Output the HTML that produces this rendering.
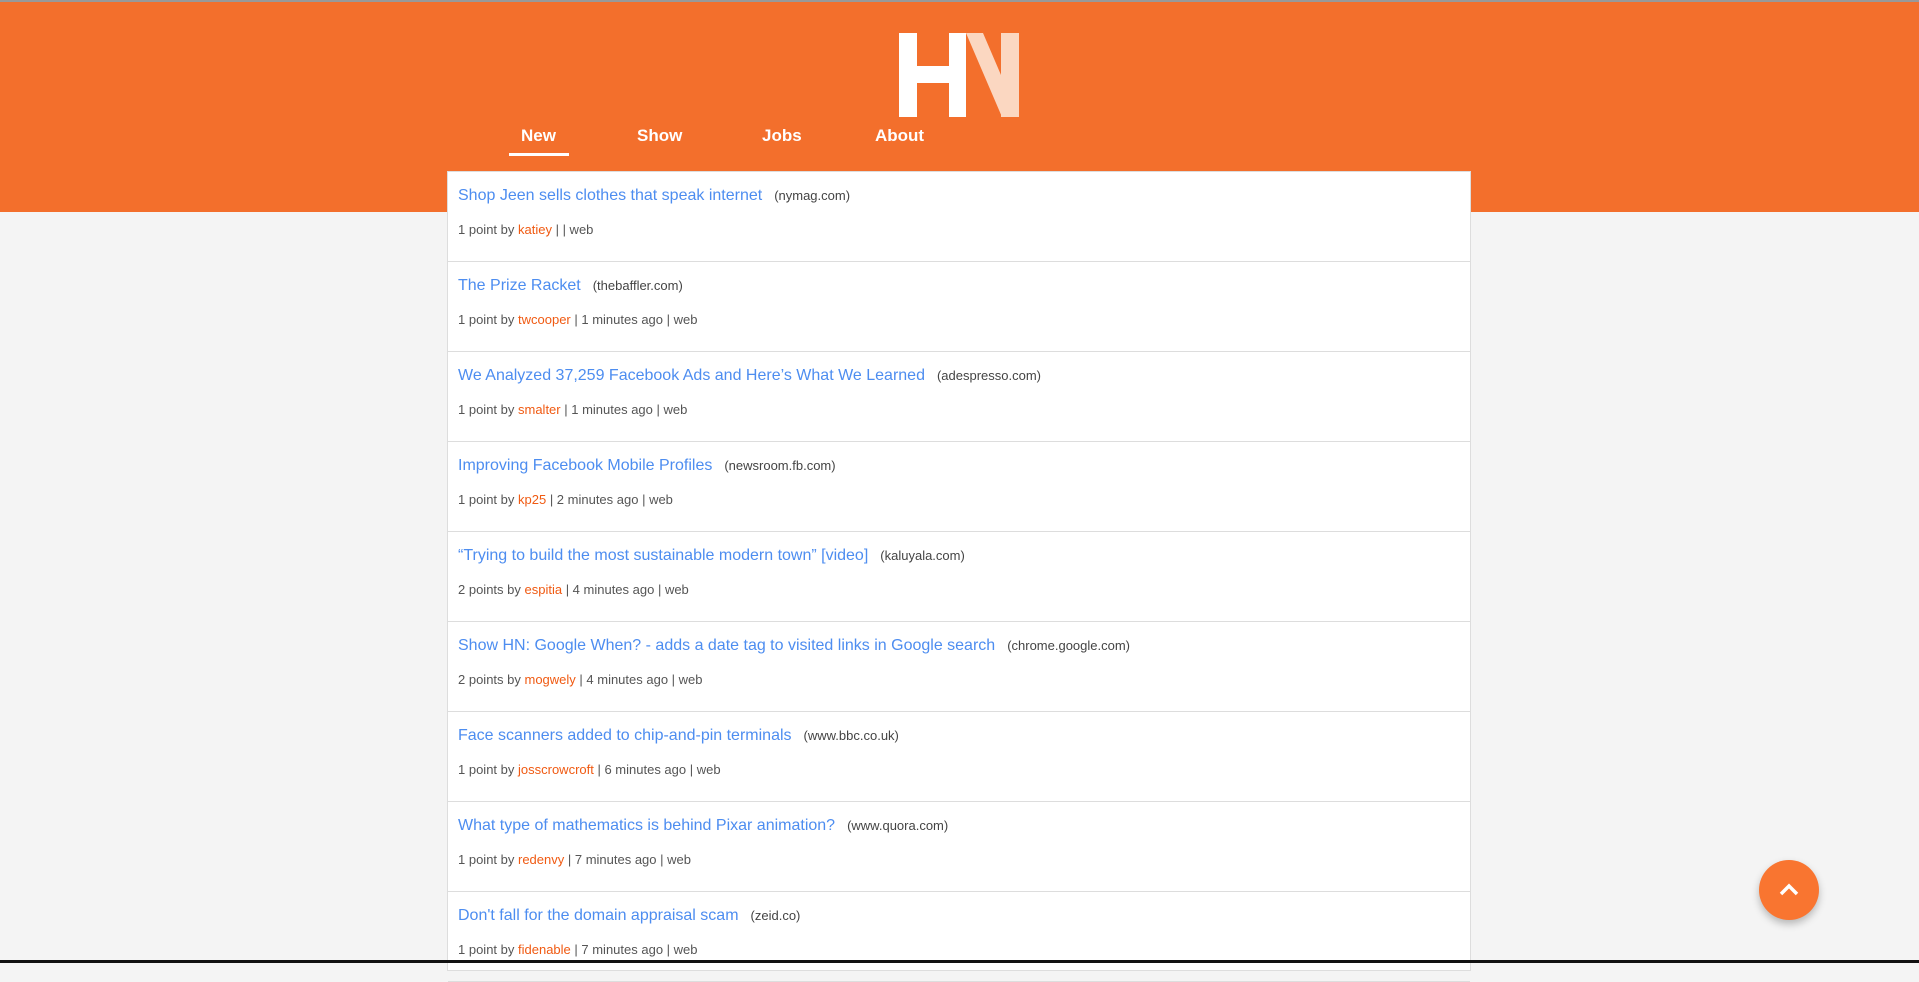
<!DOCTYPE html>
<html><head><meta charset="utf-8"><style>
*{margin:0;padding:0;box-sizing:border-box}
body{width:1919px;height:963px;overflow:hidden;background:#f4f4f4;font-family:"Liberation Sans",sans-serif;position:relative}
.hdr{position:absolute;left:0;top:0;width:1919px;height:212px;background:#f36f2c;border-top:2px solid #999}
.logo{position:absolute;left:899px;top:31px}
.nav a{position:absolute;top:124px;color:#fff;font-weight:bold;font-size:17px;text-decoration:none}
.ul{position:absolute;left:509px;top:151px;width:60px;height:3px;background:#fff}
.card{position:absolute;left:447px;top:171px;width:1024px;height:800px;background:#fff;border:1px solid #ddd}
.it{height:90px;border-bottom:1px solid #ddd;padding-left:10px;position:relative}
.t{position:absolute;top:15px;left:10px;font-size:16px;color:#4d8df0;white-space:nowrap}
.t small{font-size:13px;color:#444;margin-left:12px}
.m{position:absolute;top:50px;left:10px;font-size:13px;color:#555;white-space:nowrap}
.m b{font-weight:normal;color:#f05a12}
.btn{position:absolute;left:1759px;top:860px;width:60px;height:60px;border-radius:50%;background:#f97530;box-shadow:0 4px 8px rgba(0,0,0,.25)}
.bot{position:absolute;left:0;top:960px;width:1919px;height:3px;background:#111}
</style></head><body>
<div class="hdr">
<svg class="logo" width="122" height="84" viewBox="0 0 122 84">
<path d="M67 0 L84 0 L120 84 L103 84 Z M102 0 L120 0 L120 84 L102 84 Z" fill="#fbd7c1"/>
<path d="M0 0 H18 V33 H50 V0 H67 V84 H50 V50 H18 V84 H0 Z" fill="#fff"/>
</svg>
<div class="nav"><a style="left:521px">New</a><a style="left:637px">Show</a><a style="left:762px">Jobs</a><a style="left:875px">About</a></div>
<div class="ul"></div>
</div>
<div class="card">
<div class="it"><div class="t">Shop Jeen sells clothes that speak internet<small>(nymag.com)</small></div><div class="m">1 point by <b>katiey</b> | | web</div></div>
<div class="it"><div class="t">The Prize Racket<small>(thebaffler.com)</small></div><div class="m">1 point by <b>twcooper</b> | 1 minutes ago | web</div></div>
<div class="it"><div class="t">We Analyzed 37,259 Facebook Ads and Here’s What We Learned<small>(adespresso.com)</small></div><div class="m">1 point by <b>smalter</b> | 1 minutes ago | web</div></div>
<div class="it"><div class="t">Improving Facebook Mobile Profiles<small>(newsroom.fb.com)</small></div><div class="m">1 point by <b>kp25</b> | 2 minutes ago | web</div></div>
<div class="it"><div class="t">“Trying to build the most sustainable modern town” [video]<small>(kaluyala.com)</small></div><div class="m">2 points by <b>espitia</b> | 4 minutes ago | web</div></div>
<div class="it"><div class="t">Show HN: Google When? - adds a date tag to visited links in Google search<small>(chrome.google.com)</small></div><div class="m">2 points by <b>mogwely</b> | 4 minutes ago | web</div></div>
<div class="it"><div class="t">Face scanners added to chip-and-pin terminals<small>(www.bbc.co.uk)</small></div><div class="m">1 point by <b>josscrowcroft</b> | 6 minutes ago | web</div></div>
<div class="it"><div class="t">What type of mathematics is behind Pixar animation?<small>(www.quora.com)</small></div><div class="m">1 point by <b>redenvy</b> | 7 minutes ago | web</div></div>
<div class="it"><div class="t">Don't fall for the domain appraisal scam<small>(zeid.co)</small></div><div class="m">1 point by <b>fidenable</b> | 7 minutes ago | web</div></div>
</div>
<div class="btn"><svg width="60" height="60" viewBox="0 0 60 60"><path d="M22 34 L30 26 L38 34" stroke="#fff" stroke-width="3.5" fill="none"/></svg></div>
<div class="bot"></div>
</body></html>
